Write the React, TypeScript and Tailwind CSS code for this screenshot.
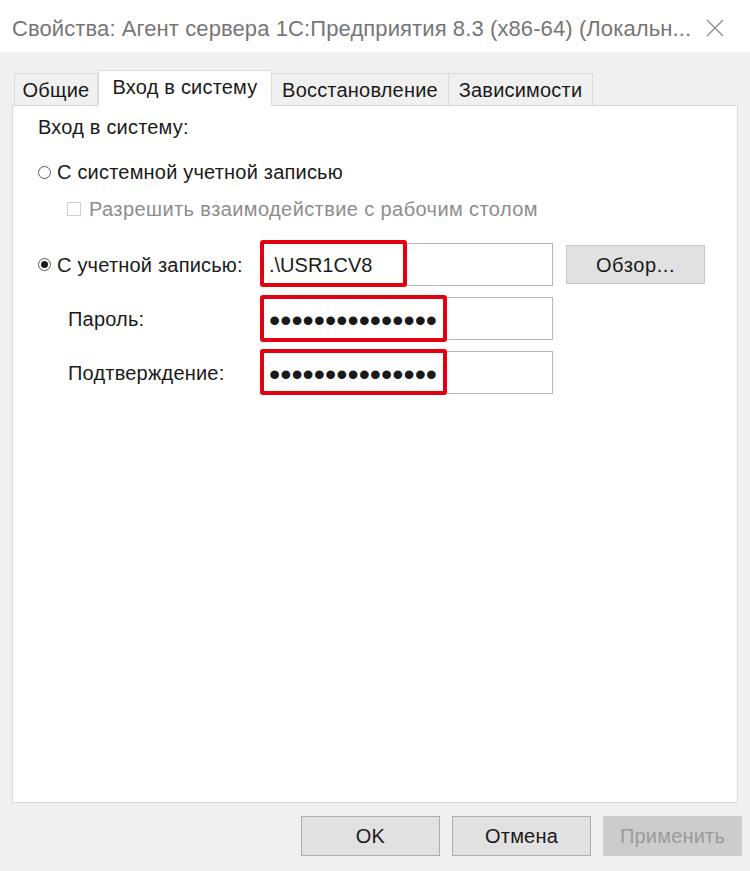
import React from 'react';

const font = { fontFamily: '"Liberation Sans", Arial, sans-serif' };

function Radio({ checked }: { checked?: boolean }) {
  return (
    <span className="grid h-[13px] w-[13px] place-items-center rounded-full border border-[#5a5a5a] bg-white">
      {checked && <span className="h-[7px] w-[7px] rounded-full bg-[#1a1a1a]" />}
    </span>
  );
}

function Field({ children, mark }: { children: React.ReactNode; mark: string }) {
  return (
    <div className="relative flex h-[43px] items-center border border-[#b8b8b8] bg-white pl-[8px]">
      {children}
      <div className={`pointer-events-none absolute left-[-1px] rounded-[3px] border-[4px] border-[#e3000f] ${mark}`} />
    </div>
  );
}

const dots = '•••••••••••••••';

export default function App() {
  return (
    <div className="flex h-[871px] w-[750px] flex-col bg-[#f0f0f0] text-[20px] tracking-[0.2px] text-[#1a1a1a]" style={font}>
      {/* title bar */}
      <div className="flex h-[52px] items-center justify-between bg-white pl-[12px] pr-[26px] pt-[4px]">
        <span className="text-[22px] tracking-[0.1px] text-[#767676]">
          Свойства: Агент сервера 1С:Предприятия 8.3 (x86-64) (Локальн...
        </span>
        <svg width="18" height="18" viewBox="0 0 18 18" className="text-[#8a8a8a]">
          <path d="M1 1 L17 17 M17 1 L1 17" stroke="currentColor" strokeWidth="1.2" fill="none" />
        </svg>
      </div>

      {/* tabs */}
      <div className="mt-[18px] flex h-[35px] items-end pl-[14px]">
        <div className="flex h-[32px] w-[84px] items-center justify-center border border-b-0 border-[#dadada] bg-[#f0f0f0]">Общие</div>
        <div className="z-10 -mb-px flex h-[36px] w-[174px] items-center justify-center border border-b-0 border-[#dadada] bg-white pb-[4px]">
          Вход в систему
        </div>
        <div className="flex h-[32px] w-[177px] items-center justify-center border border-b-0 border-l-0 border-[#dadada] bg-[#f0f0f0]">Восстановление</div>
        <div className="flex h-[32px] w-[144px] items-center justify-center border border-b-0 border-l-0 border-[#dadada] bg-[#f0f0f0]">Зависимости</div>
      </div>

      {/* page */}
      <div className="mx-[12px] h-[698px] border border-[#d9d9d9] bg-white pl-[25px] pt-[9px]">
        <div className="leading-[24px]">Вход в систему:</div>

        <div className="mt-[21px] flex items-center gap-[6px] leading-[24px]">
          <Radio />
          <span>С системной учетной записью</span>
        </div>

        <div className="mt-[13px] flex items-center gap-[8px] pl-[29px] leading-[24px] text-[#8d8d8d]">
          <span className="h-[14px] w-[14px] border border-[#cfcfcf]" />
          <span className="tracking-[0.4px]">Разрешить взаимодействие с рабочим столом</span>
        </div>

        <div className="mt-[22px] grid grid-cols-[222px_293px_139px] items-center gap-x-[13px] gap-y-[11px]">
          <div className="flex items-center gap-[6px]">
            <Radio checked />
            <span>С учетной записью:</span>
          </div>
          <div className="-ml-[13px] w-[293px]">
            <Field mark="top-[-4px] h-[47px] w-[147px]">
              <span className="tracking-normal">.\USR1CV8</span>
            </Field>
          </div>
          <button className="-ml-[13px] h-[39px] w-[139px] border border-[#c8c8c8] bg-[#e1e1e1] tracking-[0.6px]">
            Обзор...
          </button>

          <div className="pl-[30px]">Пароль:</div>
          <div className="-ml-[13px] w-[293px]">
            <Field mark="top-[-3px] h-[47px] w-[187px]">
              <span className="pt-[2px] text-[32px] leading-none tracking-[0px]">{dots}</span>
            </Field>
          </div>
          <div />

          <div className="pl-[30px]">Подтверждение:</div>
          <div className="-ml-[13px] w-[293px]">
            <Field mark="top-[-3px] h-[46px] w-[187px]">
              <span className="pt-[2px] text-[32px] leading-none tracking-[0px]">{dots}</span>
            </Field>
          </div>
          <div />
        </div>
      </div>

      {/* dialog buttons */}
      <div className="mt-[13px] flex justify-end gap-[12px] pr-[8px]">
        <button className="h-[40px] w-[139px] border border-[#adadad] bg-[#e1e1e1]">OK</button>
        <button className="h-[40px] w-[139px] border border-[#adadad] bg-[#e1e1e1]">Отмена</button>
        <button className="h-[40px] w-[139px] border border-[#cccccc] bg-[#cccccc] text-[#9a9a9a]">Применить</button>
      </div>
    </div>
  );
}
